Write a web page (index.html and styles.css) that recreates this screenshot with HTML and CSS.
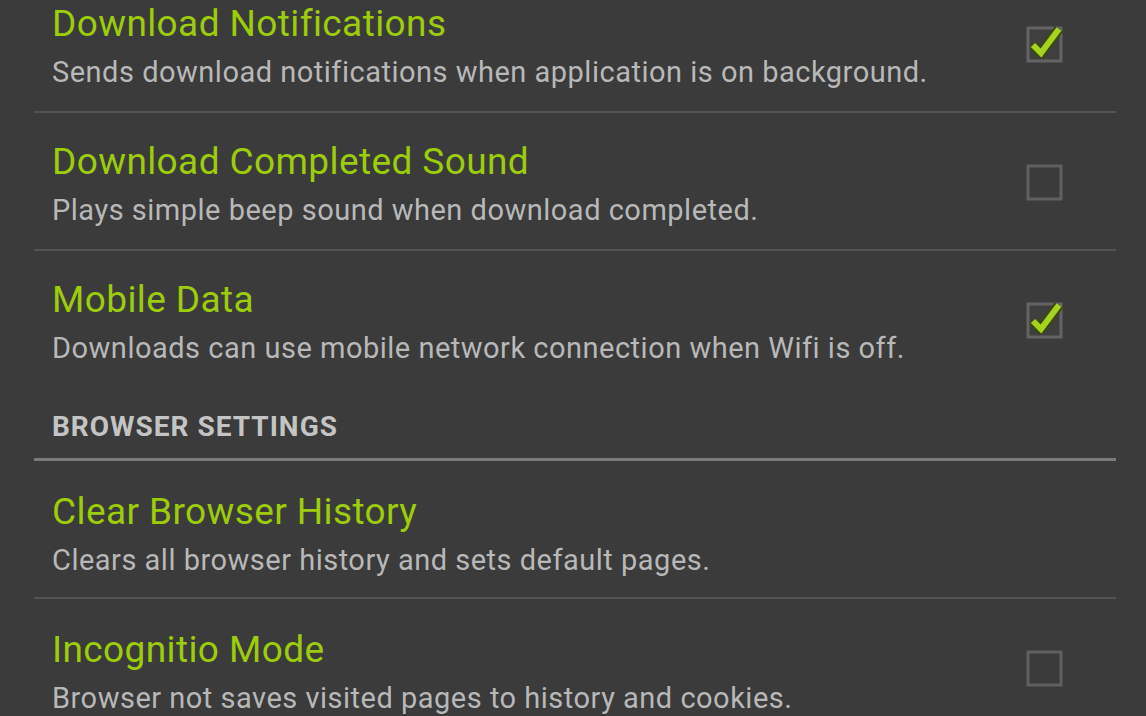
FILE: index.html
```html
<!DOCTYPE html>
<html lang="en">
<head>
  <meta charset="UTF-8">
  <title>Settings</title>
  <link rel="stylesheet" href="styles.css">
</head>
<body>
  <div class="settings">
    <div class="pref">
      <div class="pref-text">
        <div class="pref-title">Download Notifications</div>
        <div class="pref-summary">Sends download notifications when application is on background.</div>
      </div>
      <svg class="check" viewBox="0 0 48 48" width="48" height="48">
        <rect x="7" y="9" width="33" height="33" fill="#3f3f3f" stroke="#646464" stroke-width="3"/>
        <path d="M12 26 L20 34 L38 10" fill="none" stroke="#3a4a12" stroke-width="10" stroke-linejoin="round"/>
        <path d="M12 26 L20 34 L38 10" fill="none" stroke="#a6d41e" stroke-width="6"/>
      </svg>
    </div>
    <div class="pref">
      <div class="pref-text">
        <div class="pref-title">Download Completed Sound</div>
        <div class="pref-summary">Plays simple beep sound when download completed.</div>
      </div>
      <svg class="check" viewBox="0 0 48 48" width="48" height="48">
        <rect x="7" y="9" width="33" height="33" fill="#3b3b3b" stroke="#606060" stroke-width="3"/>
      </svg>
    </div>
    <div class="pref pref-last">
      <div class="pref-text">
        <div class="pref-title">Mobile Data</div>
        <div class="pref-summary">Downloads can use mobile network connection when Wifi is off.</div>
      </div>
      <svg class="check" viewBox="0 0 48 48" width="48" height="48">
        <rect x="7" y="9" width="33" height="33" fill="#3f3f3f" stroke="#646464" stroke-width="3"/>
        <path d="M12 26 L20 34 L38 10" fill="none" stroke="#3a4a12" stroke-width="10" stroke-linejoin="round"/>
        <path d="M12 26 L20 34 L38 10" fill="none" stroke="#a6d41e" stroke-width="6"/>
      </svg>
    </div>

    <div class="category">BROWSER SETTINGS</div>

    <div class="pref pref-lower">
      <div class="pref-text">
        <div class="pref-title">Clear Browser History</div>
        <div class="pref-summary">Clears all browser history and sets default pages.</div>
      </div>
    </div>
    <div class="pref pref-lower">
      <div class="pref-text">
        <div class="pref-title">Incognitio Mode</div>
        <div class="pref-summary">Browser not saves visited pages to history and cookies.</div>
      </div>
      <svg class="check" viewBox="0 0 48 48" width="48" height="48">
        <rect x="7" y="9" width="33" height="33" fill="#3b3b3b" stroke="#606060" stroke-width="3"/>
      </svg>
    </div>
  </div>
</body>
</html>
```

FILE: styles.css
```css
body {
  margin: 0;
  background-color: #3b3b3b;
  font-family: Roboto, "Noto Sans", sans-serif;
  overflow: hidden;
}

.settings {
  margin: -25px 30px 0 34px;
}

.pref {
  display: flex;
  align-items: flex-start;
  height: 138px;
  box-sizing: border-box;
  padding: 27px 47px 0 18px;
  border-bottom: 2px solid #525252;
}

/* the row before a category header has no divider */
.pref-last {
  border-bottom-color: transparent;
}

.pref-lower {
  padding-top: 29px;
}

.pref-text {
  flex: 1;
}

.pref-title {
  font-size: 37px;
  line-height: 44px;
  letter-spacing: 0.4px;
  color: #9dcc0a;
}

.pref-summary {
  margin-top: 8px;
  font-size: 29px;
  line-height: 36px;
  letter-spacing: 0.5px;
  color: #b8b8b8;
}

.check {
  display: block;
  flex: none;
  align-self: center;
  margin-top: -27px;
}

.pref-lower .check {
  margin-top: -29px;
}

.category {
  padding: 23px 0 16px 18px;
  font-size: 28px;
  line-height: 30px;
  font-weight: bold;
  letter-spacing: 1px;
  color: #c4c4c4;
  border-bottom: 3px solid #7a7a7a;
}
```
